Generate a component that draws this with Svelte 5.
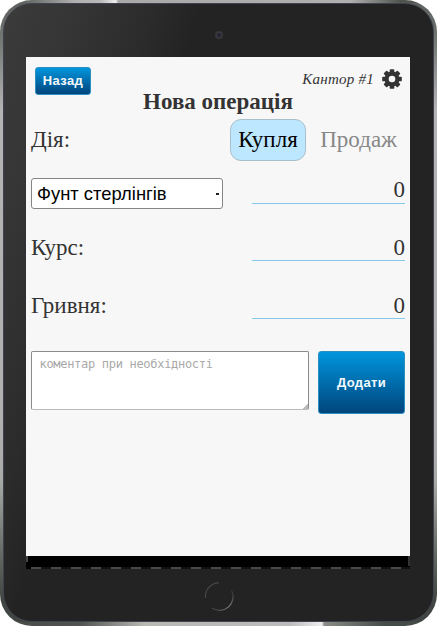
<script>
  let fields = $state([
    { label: 'Курс:', value: '0' },
    { label: 'Гривня:', value: '0' }
  ]);
  let amount = $state('0');
</script>

<div class="tablet">
  <div class="body">
    <div class="top"><span class="camera"></span></div>
    <main>
      <header>
        <button class="back">Назад</button>
        <div class="desk">
          <span>Кантор #1</span>
          <svg width="20" height="20" viewBox="-10 -10 20 20">
            <g fill="#333">
              {#each [0, 45, 90, 135] as angle}
                <rect x="-2.3" y="-9.8" width="4.6" height="19.6" rx="0.9" transform="rotate({angle})" />
              {/each}
              <circle r="7.5" />
            </g>
            <circle r="3.3" fill="#f7f7f7" />
          </svg>
        </div>
      </header>
      <h1>Нова операція</h1>
      <div class="row action">
        <span class="label">Дія:</span>
        <div class="tabs"><span class="tab on">Купля</span><span class="tab">Продаж</span></div>
      </div>
      <div class="row currency">
        <div class="select"><span>Фунт стерлінгів</span><i></i></div>
        <div class="value">{amount}</div>
      </div>
      {#each fields as field}
        <div class="row field">
          <span class="label">{field.label}</span>
          <div class="value">{field.value}</div>
        </div>
      {/each}
      <div class="row comment">
        <div class="note">
          <textarea placeholder="коментар при необхідності"></textarea>
        </div>
        <button class="add">Додати</button>
      </div>
    </main>
    <div class="strip"><div class="sides"></div><div class="dashes"></div></div>
    <div class="bottom">
      <svg width="30" height="30" viewBox="0 0 30 30" fill="none">
        <defs>
          <linearGradient id="ring-low" x1="0" y1="1" x2="1" y2="0">
            <stop offset="0" stop-color="#3a3a3a" /><stop offset="0.5" stop-color="#777" /><stop offset="1" stop-color="#333" />
          </linearGradient>
        </defs>
        <path d="M1.5 16A13.5 13.5 0 0 1 15 0.9" stroke="#484848" stroke-width="1.1" />
        <path d="M8 26A13.5 13.5 0 0 0 27.5 8.5" stroke="url(#ring-low)" stroke-width="1.3" />
      </svg>
    </div>
  </div>
</div>

<style>
  :global(body) { background: #fff; overflow: hidden; }
  * { box-sizing: border-box; }
  .tablet {
    width: 437px; height: 626px; padding: 3px 3px 4px; border-radius: 32px;
    background:
      linear-gradient(90deg, #555b57 0, #666b67 28px, #b0b0b0 75px, #b8b8b8 100px, #eee 116px, #a9a9a9 118px, #b0b0b0 350px, #50554f 400px) top / 100% 3px no-repeat,
      linear-gradient(90deg, #484c49 0, #50534f 80px, #b8b8b5 145px, #bbb 290px, #eee 322px, #8a8d88 324px, #454b47 385px) bottom / 100% 4px no-repeat,
      linear-gradient(180deg, #5b605c 0, #737874 40px, #b4b4b4 110px, #b0b0b0 420px, #a8aaa8 480px, #5b605b 565px, #414642 600px);
  }
  .body {
    height: 619px; border: 1px solid #40434e; border-radius: 29px; overflow: hidden;
    background: linear-gradient(107deg, #3b3b3b 0, #353535 70px, #2b2b2b 145px, #232323 190px, #232323 100%);
    display: flex; flex-direction: column;
  }
  .top { height: 53px; flex: none; display: flex; justify-content: center; padding: 27px 0 0 1px; }
  .camera { width: 8px; height: 8px; border-radius: 50%; border: 2px solid #38383a; background: #26223a; }
  main {
    flex: none; width: 384px; height: 499px; margin-left: 22px; padding: 10px 5px 0;
    background: #f7f7f7; color: #333; font: 23px/26px "Liberation Serif", serif;
  }
  header { display: flex; justify-content: space-between; height: 22px; padding: 0 3px 0 4px; }
  button {
    font: bold 13px "Liberation Sans", sans-serif; color: #f2f8fc; padding: 0;
    letter-spacing: 0.35px; border: 1px solid #2c8fc1; border-radius: 3px;
    background: linear-gradient(#0095dd, #00457c); flex: none;
  }
  .back { width: 56px; height: 28px; padding-bottom: 1px; }
  .desk { display: flex; gap: 8px; height: 24px; font: italic 15px/24px "Liberation Serif", serif; letter-spacing: 0.25px; }
  .desk svg { margin-top: 2px; }
  h1 { margin: 0; font-size: 23px; line-height: 26px; text-align: center; }
  .row { display: flex; justify-content: space-between; }
  .action { height: 42px; margin-top: 4px; align-items: center; }
  .tabs { display: flex; height: 42px; }
  .tab { padding: 0 8px; line-height: 41px; color: #888; }
  .on { width: 76px; height: 42px; margin-top: -0.5px; padding: 0 7px; margin-right: 6px; border: 1px solid #a9bfca; border-radius: 11px; background: #bde6ff; color: #000; line-height: 40.5px; }
  .currency { height: 58px; margin-top: 5px; }
  .select {
    width: 192px; height: 31px; margin-top: 12px; padding: 0 3px 0 5px; border: 1px solid #858585;
    border-radius: 3px; background: #fff; color: #000; display: flex; align-items: center;
    justify-content: space-between; font: 18.4px "Liberation Sans", sans-serif;
  }
  .select i { width: 3px; height: 2px; background: #222; }
  .value { width: 153.5px; height: 27px; margin-top: 11px; border-bottom: 1px solid #85caeb; text-align: right; line-height: 26px; }
  .field { height: 58px; }
  .field .label { margin-top: 11px; }
  .field .value { height: 26px; }
  .comment { margin-top: 11px; }
  .note { height: 59px; display: flex; }
  textarea {
    width: 278px; height: 59px; padding: 5px 7.5px; border: 1px solid #8b8b8b; border-bottom-color: #bbb;
    border-radius: 2px; margin: 0; font: 12px/15px "DejaVu Sans Mono", monospace; letter-spacing: -0.3px;
    resize: none;
    background: linear-gradient(135deg, transparent 50%, #bbb 50%) right bottom / 5px 5px no-repeat #fff;
  }
  textarea::placeholder { color: #a9a9a9; opacity: 1; }
  .add { width: 87px; height: 62.5px; }
  .strip { flex: none; width: 384px; height: 13px; margin-left: 22px; background: #000; }
  .sides { height: 11px; background: linear-gradient(#444, #444) left top / 2px 6px no-repeat, linear-gradient(#333, #333) right top / 2px 10px no-repeat; }
  .dashes { height: 2px; background: repeating-linear-gradient(90deg, #484848 0 10px, #111 10px 20px) 5px 0 no-repeat; }
  .bottom { display: flex; justify-content: center; padding: 13px 0 0 1px; }
</style>
